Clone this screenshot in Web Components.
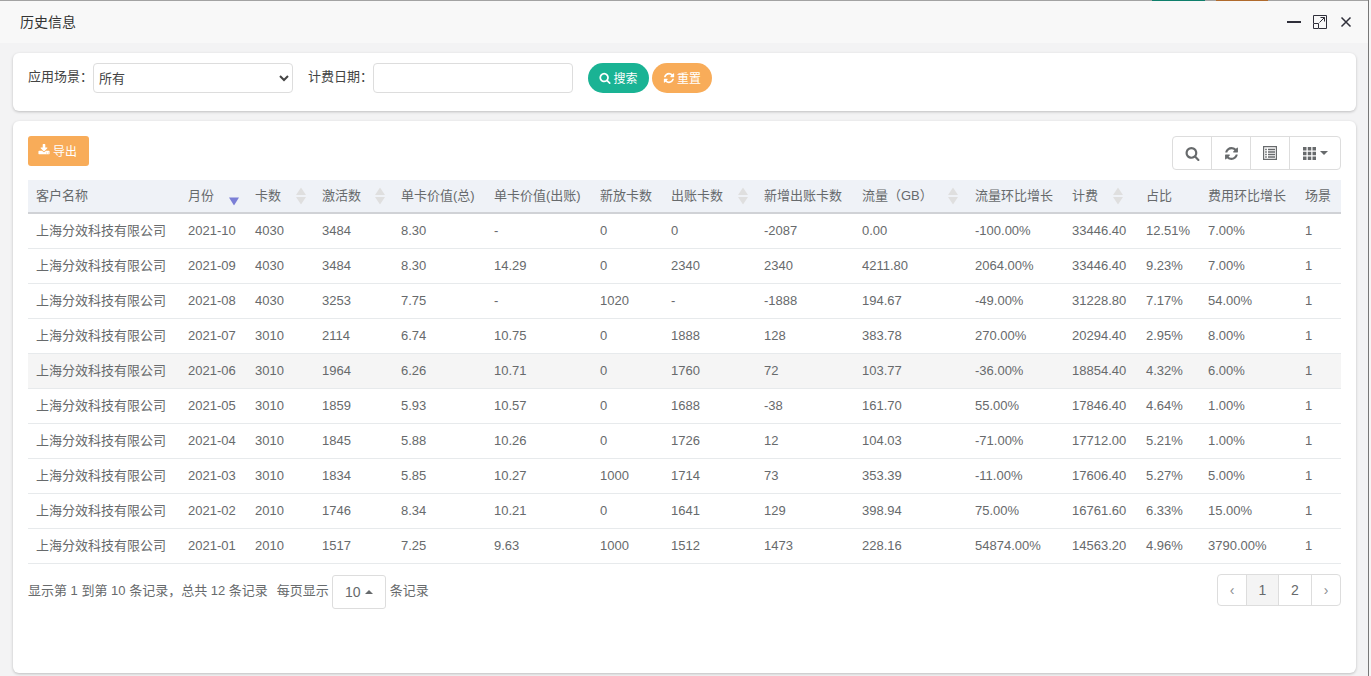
<!DOCTYPE html>
<html lang="zh"><head><meta charset="utf-8"><title>历史信息</title>
<style>
html,body{margin:0;padding:0;background:#f6f6f6;height:100%;overflow:hidden}
body{font:13px "Liberation Sans","Noto Sans CJK SC",sans-serif;color:#676a6c}
</style></head><body>
<template id="i-search"><svg viewBox="0 0 1792 1792" fill="currentColor"><path d="M1216 832q0-185-131.500-316.500t-316.500-131.500-316.500 131.500-131.500 316.500 131.500 316.500 316.500 131.500 316.500-131.500 131.500-316.500zm512 832q0 52-38 90t-90 38q-54 0-90-38l-343-342q-179 124-399 124-143 0-273.500-55.500t-225-150-150-225-55.500-273.500 55.500-273.500 150-225 225-150 273.500-55.500 273.500 55.500 225 150 150 225 55.500 273.500q0 220-124 399l343 343q37 37 37 90z"/></svg></template>
<template id="i-refresh"><svg viewBox="0 0 1792 1792" fill="currentColor"><path d="M1639 1056q0 5-1 7-64 268-268 434.500t-478 166.500q-146 0-282.500-55t-243.500-157l-129 129q-19 19-45 19t-45-19-19-45v-448q0-26 19-45t45-19h448q26 0 45 19t19 45-19 45l-137 137q71 66 161 102t187 36q134 0 250-65t186-179q11-17 53-117 8-23 30-23h192q13 0 22.500 9.500t9.500 22.500zm25-800v448q0 26-19 45t-45 19h-448q-26 0-45-19t-19-45 19-45l138-138q-148-137-349-137-134 0-250 65t-186 179q-11 17-53 117-8 23-30 23h-199q-13 0-22.500-9.500t-9.500-22.500v-7q65-268 270-434.500t480-166.500q146 0 284 55.500t245 156.500l130-129q19-19 45-19t45 19 19 45z"/></svg></template>
<template id="i-download"><svg viewBox="0 0 1792 1792" fill="currentColor"><path d="M1344 1344q0-26-19-45t-45-19-45 19-19 45 19 45 45 19 45-19 19-45zm256 0q0-26-19-45t-45-19-45 19-19 45 19 45 45 19 45-19 19-45zm128-224v320q0 40-28 68t-68 28h-1472q-40 0-68-28t-28-68v-320q0-40 28-68t68-28h465l135 136q58 56 136 56t136-56l136-136h464q40 0 68 28t28 68zm-325-569q17 41-14 70l-448 448q-18 19-45 19t-45-19l-448-448q-31-29-14-70 17-39 59-39h256v-448q0-26 19-45t45-19h256q26 0 45 19t19 45v448h256q42 0 59 39z"/></svg></template>
<template id="i-list"><svg viewBox="0 0 14 14"><path fill="none" stroke="currentColor" stroke-width="1.200" d="M.6.6h12.800v12.800H.6z"/><path fill="none" stroke="currentColor" stroke-width="1.400" d="M2.200 3.500h1.600M5 3.500h7M2.200 6h1.600M5 6h7M2.200 8.500h1.600M5 8.500h7M2.200 11h1.600M5 11h7"/></svg></template>
<template id="i-th"><svg viewBox="0 0 13 13" fill="currentColor"><path d="M0 0h3.500v3.500H0zM4.750 0h3.500v3.500h-3.500zM9.500 0H13v3.500H9.500zM0 4.750h3.500v3.500H0zM4.750 4.750h3.500v3.500h-3.500zM9.500 4.750H13v3.500H9.500zM0 9.500h3.500V13H0zM4.750 9.500h3.500V13h-3.500zM9.500 9.500H13V13H9.500z"/></svg></template>

<script>
const tpl=id=>document.getElementById(id).innerHTML;

class FaIcon extends HTMLElement{
  connectedCallback(){
    const s=this.getAttribute('size')||14;
    this.attachShadow({mode:'open'}).innerHTML=`<style>:host{display:inline-flex;width:${s}px;height:${s}px;flex:none}svg{width:100%;height:100%;display:block}</style>${tpl('i-'+this.getAttribute('name'))}`;
  }
}
customElements.define('fa-icon',FaIcon);

class HistWindow extends HTMLElement{
  constructor(){super();this.attachShadow({mode:'open'}).innerHTML=`<style>
    :host{display:flex;flex-direction:column;width:1369px;height:676px;box-sizing:border-box;background:#f3f3f4;border-right:1px solid #777}
    .strip{display:flex;height:1px;background:#a3a3a3;flex:none}
    .strip i{display:block;height:1px}
    .g{margin-left:1152px;width:53px;background:#0f7f6c}
    .o{margin-left:11px;width:52px;background:#b06a2c}
    .body{flex:1;display:flex;flex-direction:column;gap:10px;padding:10px 12px 3px 13px;min-height:0}
  </style><div class="strip"><i class="g"></i><i class="o"></i></div><slot name="title"></slot><div class="body"><slot></slot></div>`;}
}
customElements.define('hist-window',HistWindow);

class HistTitlebar extends HTMLElement{
  constructor(){super();this.attachShadow({mode:'open'}).innerHTML=`<style>
    :host{display:flex;align-items:center;height:42px;flex:none;background:#f8f8f8;padding:0 16px 0 20px;color:#333;font-size:14px;box-sizing:border-box}
    .t{flex:1;padding-bottom:2px}
    .b{display:flex;align-items:center;gap:13px;color:#2f2f3a}
    .b svg:first-child{margin-right:-1px}
    svg{display:block}
  </style><span class="t"><slot></slot></span><div class="b">
    <svg width="14" height="14" viewBox="0 0 14 14"><path d="M0 7h14" stroke="currentColor" stroke-width="2"/></svg>
    <svg width="14" height="14" viewBox="0 0 14 14" fill="none" stroke="currentColor"><path d="M.5 8V.5h13v13H6"/><path d="M.5 8.500h5v5h-5z"/><path d="M6.500 7.500l5-5M7.500 2.500h4v4"/></svg>
    <svg width="12" height="12" viewBox="0 0 12 12"><path d="M1.500 1.500l9 9M10.500 1.500l-9 9" stroke="currentColor" stroke-width="1.500"/></svg>
  </div>`;}
}
customElements.define('hist-titlebar',HistTitlebar);

class HistCard extends HTMLElement{
  constructor(){super();this.attachShadow({mode:'open'}).innerHTML=`<style>
    :host{display:block;background:#fff;border-radius:6px;box-shadow:0 1px 3px rgba(0,0,0,.22);box-sizing:border-box}
  </style><slot></slot>`;}
}
customElements.define('hist-card',HistCard);

class SearchBar extends HTMLElement{
  constructor(){super();this.attachShadow({mode:'open'}).innerHTML=`<style>
    :host{display:flex;align-items:flex-start;padding:10px 15px;height:58px;box-sizing:border-box;font-size:13px;color:#444}
    label{line-height:27px;white-space:nowrap;width:65px;flex:none}
    select,input{width:200px;height:30px;box-sizing:border-box;border:1px solid #ddd;border-radius:4px;background:#fff;font:13px "Liberation Sans","Noto Sans CJK SC",sans-serif;color:#444;padding:0 0 0 1px;margin:0;outline:none}
    input{padding:0 4px}
    .l2{margin-left:15px}
    .btn{display:inline-flex;align-items:center;justify-content:center;gap:2px;height:30px;padding-bottom:2px;box-sizing:border-box;border-radius:15px;color:#fff;font-size:12px;flex:none}
    .btn fa-icon{margin-top:1px}
    .s{width:61px;background:#1ab394;margin-left:15px}
    .r{width:60px;background:#f8ac59;margin-left:3px}
  </style>
  <label>应用场景：</label><select><option>所有</option></select>
  <label class="l2">计费日期：</label><input type="text">
  <span class="btn s"><fa-icon name="search" size="12"></fa-icon>搜索</span>
  <span class="btn r"><fa-icon name="refresh" size="12"></fa-icon>重置</span>`;}
}
customElements.define('search-bar',SearchBar);

class TableToolbar extends HTMLElement{
  constructor(){super();this.attachShadow({mode:'open'}).innerHTML=`<style>
    :host{display:flex;justify-content:space-between;align-items:flex-start;height:34px;margin-bottom:10px}
    .exp{display:inline-flex;align-items:center;justify-content:center;gap:3px;width:61px;height:30px;box-sizing:border-box;padding:0 2px 2px 0;background:#f8ac59;color:#fff;border-radius:3px;font-size:12px}
    .grp{display:flex;height:34px;border:1px solid #ddd;border-radius:4px;box-sizing:border-box;color:#676a6c}
    .grp span{display:flex;align-items:center;justify-content:center;width:39px;box-sizing:border-box;border-left:1px solid #ddd}
    .grp span:first-child{border-left:0;width:38px}
    .grp span:last-child{width:51px;gap:4px}
    .caret{width:0;height:0;border:4px solid transparent;border-top-color:#676a6c;border-bottom:0}
  </style>
  <span class="exp"><fa-icon name="download" size="12"></fa-icon>导出</span>
  <div class="grp">
    <span><fa-icon name="search" size="15"></fa-icon></span>
    <span><fa-icon name="refresh" size="15"></fa-icon></span>
    <span><fa-icon name="list" size="14"></fa-icon></span>
    <span><fa-icon name="th" size="13"></fa-icon><i class="caret"></i></span>
  </div>`;}
}
customElements.define('table-toolbar',TableToolbar);

const COLS=[["客户名称",152],["月份",67,'a',13],["卡数",67,'s',13],["激活数",79,'s',13],["单卡价值(总)",93],["单卡价值(出账)",106],["新放卡数",71],["出账卡数",93,'s',13],["新增出账卡数",98],["流量（GB）",113,'s',14],["流量环比增长",97],["计费",74,'s',20],["占比",62],["费用环比增长",97],["场景",44]];
const ROWS=`2021-10 4030 3484 8.30 - 0 0 -2087 0.00 -100.00% 33446.40 12.51% 7.00% 1
2021-09 4030 3484 8.30 14.29 0 2340 2340 4211.80 2064.00% 33446.40 9.23% 7.00% 1
2021-08 4030 3253 7.75 - 1020 - -1888 194.67 -49.00% 31228.80 7.17% 54.00% 1
2021-07 3010 2114 6.74 10.75 0 1888 128 383.78 270.00% 20294.40 2.95% 8.00% 1
2021-06 3010 1964 6.26 10.71 0 1760 72 103.77 -36.00% 18854.40 4.32% 6.00% 1
2021-05 3010 1859 5.93 10.57 0 1688 -38 161.70 55.00% 17846.40 4.64% 1.00% 1
2021-04 3010 1845 5.88 10.26 0 1726 12 104.03 -71.00% 17712.00 5.21% 1.00% 1
2021-03 3010 1834 5.85 10.27 1000 1714 73 353.39 -11.00% 17606.40 5.27% 5.00% 1
2021-02 2010 1746 8.34 10.21 0 1641 129 398.94 75.00% 16761.60 6.33% 15.00% 1
2021-01 2010 1517 7.25 9.63 1000 1512 1473 228.16 54874.00% 14563.20 4.96% 3790.00% 1`.split('\n').map(r=>["上海分效科技有限公司",...r.split(' ')]);

class HistTable extends HTMLElement{
  constructor(){super();
    const sort=(k,r)=>k=='a'
      ?`<svg class="so" style="right:${r-5}px;margin-top:1px" width="10" height="17" viewBox="0 0 10 17"><path d="M0 9h10l-5 8z" fill="#7b7fd6"/></svg>`
      :k?`<svg class="so" style="right:${r-5}px" width="10" height="17" viewBox="0 0 10 17"><path d="M5 0l5 7.500H0zM0 9.500h10L5 17z" fill="#dfdfdf"/></svg>`:'';
    this.attachShadow({mode:'open'}).innerHTML=`<style>
      :host{display:block;width:1313px}
      table{border-collapse:collapse;table-layout:fixed;width:1313px;font-size:13px;color:#676a6c}
      th{height:33px;box-sizing:border-box;background:#eff2f7;border-bottom:2px solid #d0d2d6;font-weight:400;text-align:left;padding:0 8px 3px;white-space:nowrap;position:relative}
      th .so{position:absolute;top:50%;transform:translateY(-50%)}
      td{height:35px;box-sizing:border-box;border-bottom:1px solid #e7eaec;padding:0 8px;white-space:nowrap}
      td:first-child{padding-bottom:2px}
      tr.h td{background:#f5f5f5}
    </style><table><colgroup>${COLS.map(c=>`<col style="width:${c[1]}px">`).join('')}</colgroup>
    <thead><tr>${COLS.map(c=>`<th>${c[0]}${sort(c[2],c[3])}</th>`).join('')}</tr></thead>
    <tbody>${ROWS.map((r,i)=>`<tr class="${i==4?'h':''}">${r.map(v=>`<td>${v}</td>`).join('')}</tr>`).join('')}</tbody></table>`;}
}
customElements.define('hist-table',HistTable);

class TablePager extends HTMLElement{
  constructor(){super();this.attachShadow({mode:'open'}).innerHTML=`<style>
    :host{display:flex;justify-content:space-between;align-items:flex-start;margin-top:10px;font-size:13px;color:#676a6c}
    .l{display:flex;align-items:center;height:35px;white-space:nowrap}
    .l>span{padding-bottom:3px}
    .l>.sz{padding:0;margin:0 4px 0 3px;position:relative;top:1px}
    .sz{display:inline-flex;align-items:center;justify-content:center;gap:4px;width:54px;height:34px;box-sizing:border-box;border:1px solid #ddd;border-radius:3px;font-size:14px}
    .up{width:0;height:0;border:4px solid transparent;border-bottom-color:#676a6c;border-top:0}
    .p{display:flex;height:32px;box-sizing:border-box;border:1px solid #ddd;border-radius:4px;font-size:14px}
    .p span{display:flex;align-items:center;justify-content:center;box-sizing:border-box;border-left:1px solid #ddd}
    .p span:first-child{border-left:0}
    .a{background:#f4f4f4}
    .m{color:#8a8d8f}
  </style>
  <div class="l"><span>显示第 1 到第 10 条记录，总共 12 条记录</span><span style="margin-left:9px">每页显示</span><span class="sz">10<i class="up"></i></span><span>条记录</span></div>
  <div class="p"><span class="m" style="width:28px">‹</span><span class="a" style="width:32px">1</span><span style="width:33px">2</span><span class="m" style="width:29px">›</span></div>`;}
}
customElements.define('table-pager',TablePager);
</script>

<hist-window>
  <hist-titlebar slot="title">历史信息</hist-titlebar>
  <hist-card style="flex:none"><search-bar></search-bar></hist-card>
  <hist-card style="flex:1;padding:15px">
    <table-toolbar></table-toolbar>
    <hist-table></hist-table>
    <table-pager></table-pager>
  </hist-card>
</hist-window>
</body></html>
